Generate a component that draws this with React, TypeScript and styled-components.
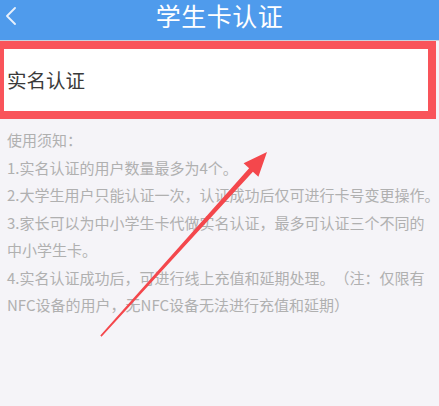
import React from "react"
import styled, { createGlobalStyle } from "styled-components"

const GlobalStyle = createGlobalStyle`
  html, body {
    margin: 0;
    padding: 0;
    background: #f5f4f8;
  }
  body {
    font-family: "Noto Sans CJK SC", "Noto Sans", sans-serif;
  }
`

const Page = styled.div`
  position: relative;
  width: 439px;
  height: 406px;
  overflow: hidden;
  background: #f5f4f8;
`

const Header = styled.header`
  height: 40px;
  background: #4f9bec;
  border-bottom: 1px solid #c9d3de;
  display: flex;
  align-items: flex-start;
  justify-content: center;
  position: relative;
`

const BackButton = styled.button`
  position: absolute;
  left: 3px;
  top: 6px;
  width: 16px;
  height: 20px;
  padding: 0;
  border: none;
  background: transparent;
  display: flex;
  align-items: center;
  justify-content: center;
`

const Title = styled.h1`
  margin: 0;
  padding-top: 1px;
  font-size: 25px;
  font-weight: 400;
  line-height: 28px;
  color: #ffffff;
  letter-spacing: 0.5px;
`

const HighlightBox = styled.div`
  margin-right: 3px;
  border-style: solid;
  border-color: #f9545a;
  border-width: 8px 8px 8px 4px;
  background: #ffffff;
  height: 62px;
  display: flex;
  align-items: center;
  padding-left: 3px;
`

const BoxLabel = styled.span`
  font-size: 19.5px;
  color: #3a3a3a;
  margin-top: -2px;
`

const Notes = styled.section`
  padding: 7px 0 0 7px;
  font-size: 15px;
  line-height: 27.5px;
  color: #b0b0b0;
  text-spacing-trim: space-all;
`

const NoteLine = styled.p`
  margin: 0;
  white-space: nowrap;
`

const Overlay = styled.svg`
  position: absolute;
  left: 0;
  top: 0;
  pointer-events: none;
`

// each entry is one note, split where the phone screen wrapped it
const notes: string[][] = [
  ["使用须知："],
  ["1.实名认证的用户数量最多为4个。"],
  ["2.大学生用户只能认证一次，认证成功后仅可进行卡号变更操作。"],
  ["3.家长可以为中小学生卡代做实名认证，最多可认证三个不同的", "中小学生卡。"],
  ["4.实名认证成功后，可进行线上充值和延期处理。（注：仅限有", "NFC设备的用户，无NFC设备无法进行充值和延期）"],
]

export default function App() {
  return (
    <Page>
      <GlobalStyle />
      <Header>
        <BackButton aria-label="返回">
          <svg width="12" height="18" viewBox="0 0 12 18">
            <path d="M10 1 L2 9 L10 17" fill="none" stroke="#e8f1fc" strokeWidth="1.8" strokeLinecap="round" strokeLinejoin="round" />
          </svg>
        </BackButton>
        <Title>学生卡认证</Title>
      </Header>
      <HighlightBox>
        <BoxLabel>实名认证</BoxLabel>
      </HighlightBox>
      <Notes>
        {notes.map((parts, i) => (
          <NoteLine key={i}>
            {parts.map((p, j) => (
              <React.Fragment key={j}>
                {j > 0 && <br />}
                {p}
              </React.Fragment>
            ))}
          </NoteLine>
        ))}
      </Notes>
      <Overlay width="439" height="406" viewBox="0 0 439 406">
        <polygon
          points="267,152 258.4,176.7 252.9,171.7 101.5,336.8 100.3,335.6 249.1,168.3 243.6,163.3"
          fill="#f4474c"
        />
      </Overlay>
    </Page>
  )
}
